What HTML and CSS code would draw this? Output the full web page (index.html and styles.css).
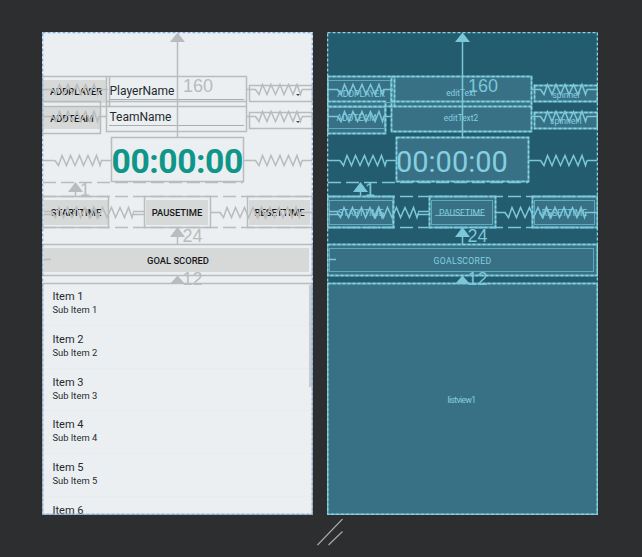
FILE: index.html
```
<!DOCTYPE html>
<html lang="en">
<head>
<meta charset="utf-8">
<title>Layout editor</title>
<link rel="stylesheet" href="styles.css">
</head>
<body>
<svg class="defs" aria-hidden="true">
  <defs>
    <path id="zig" d="M0 0l3.5 5 3.5-10 4.5 10 4-10 4.5 10 4.5-10 4 10 4.5-10 4.5 10 4-10 3.5 10 1.5-5"/>
    <g id="boxes">
      <path d="M.5 44.5H67.5V74.5H.5zM64.5 44.5H204.5V74.5H64.5zM.5 69.5H58.5V101.5H.5zM64.5 69.5H204.5V99.5H64.5zM207.5 53.5H270.5V69.5H207.5zM207.5 80.5H270.5V96.5H207.5z"/>
      <path d="M69.5 105.5H201.5V149.5H69.5zM.5 164.5H66.5V195.5H.5zM102.5 164.5H168.5V195.5H102.5zM205.5 164.5H270.5V195.5H205.5zM.5 212.5H270.5V243.5H.5zM.5 251.5H270.5V482.5H.5z"/>
    </g>
    <g id="guides">
      <path stroke-dasharray="13 5" d="M1 150.5H201M1 164.5H270M1 195.5H270"/>
    </g>
    <g id="links">
      <path d="M1 57.5h10m45 0h10M1 84.5h10m45 0h9M205 57.5h9m46 0h10M205 84.5h9m46 0h10M1 128.5h12m46 0h11M202 128.5h12m46 0h10M2 179.5h10M2 182.5h10M91 179.5h11M91 182.5h11M169 180.5h10M258 180.5h12M2 227.5h7M135.5 10V105M33.5 158V164M135.5 204V212"/>
      <use href="#zig" x="10.5" y="57.5"/><use href="#zig" x="10.5" y="84.5"/>
      <use href="#zig" x="213.5" y="57.5"/><use href="#zig" x="213.5" y="84.5"/>
      <use href="#zig" x="13" y="128.5"/><use href="#zig" x="213.5" y="128.5"/>
      <use href="#zig" x="10" y="180.5"/><use href="#zig" x="45" y="180.5"/>
      <use href="#zig" x="178" y="180.5"/><use href="#zig" x="212.5" y="180.5"/>
      <path class="head" d="M128 10L135.500 .5 143 10zM26 160l7.500-10 7.500 10zM128 205l7.500-10 7.500 10zM128 252l7.500-8.500 7.500 8.500z"/>
      <g class="numbers"><text x="141" y="60">160</text><text x="38" y="163.500">1</text><text x="140.500" y="210">24</text><text x="140.500" y="253">12</text></g>
    </g>
  </defs>
</svg>
<main class="canvas">
  <section class="screen design">
    <div class="row first">
      <div class="cell player"><span class="btn">ADDPLAYER</span></div>
      <div class="cell edit edit1"><span class="field">PlayerName</span></div>
      <div class="cell spinner"><i class="caret"></i></div>
    </div>
    <div class="row second">
      <div class="cell team"><span class="btn">ADDTEAM</span></div>
      <div class="cell edit edit2"><span class="field">TeamName</span></div>
      <div class="cell spinner"><i class="caret"></i></div>
    </div>
    <div class="cell timer">00:00:00</div>
    <div class="row actions">
      <div class="cell start"><span class="btn">STARTTIME</span></div>
      <div class="cell pause"><span class="btn">PAUSETIME</span></div>
      <div class="cell reset"><span class="btn">RESETTIME</span></div>
    </div>
    <div class="cell goal"><span class="btn">GOAL SCORED</span></div>
    <div class="cell list">
      <div class="item"><b>Item 1</b><span>Sub Item 1</span></div>
      <div class="item"><b>Item 2</b><span>Sub Item 2</span></div>
      <div class="item"><b>Item 3</b><span>Sub Item 3</span></div>
      <div class="item"><b>Item 4</b><span>Sub Item 4</span></div>
      <div class="item"><b>Item 5</b><span>Sub Item 5</span></div>
      <div class="item"><b>Item 6</b></div>
      <i class="scrollbar"></i>
    </div>
    <svg class="overlay" width="271" height="483" viewBox="0 0 271 483"><use href="#boxes"/><use href="#guides"/><use href="#links"/><rect class="edge" x=".5" y=".5" width="270" height="482"/></svg>
  </section>
  <section class="screen blueprint">
    <div class="row first">
      <div class="cell player"><span class="btn">ADDPLAYER</span></div>
      <div class="cell edit edit1"><span class="field">editText</span></div>
      <div class="cell spinner"><span>spinner</span></div>
    </div>
    <div class="row second">
      <div class="cell team"><span class="btn">ADDTEAM</span></div>
      <div class="cell edit edit2"><span class="field">editText2</span></div>
      <div class="cell spinner"><span>spinner1</span></div>
    </div>
    <div class="cell timer">00:00:00</div>
    <div class="row actions">
      <div class="cell start"><span class="btn">STARTTIME</span></div>
      <div class="cell pause"><span class="btn">PAUSETIME</span></div>
      <div class="cell reset"><span class="btn">RESETTIME</span></div>
    </div>
    <div class="cell goal"><span class="btn">GOALSCORED</span></div>
    <div class="cell list"><span class="listname">listview1</span></div>
    <svg class="overlay" width="271" height="483" viewBox="0 0 271 483"><use class="solid" href="#boxes"/><use class="dash" href="#boxes"/><use href="#guides"/><use href="#links"/><path d="M108 183.500h50" stroke-width=".8"/><rect class="edge" x=".5" y=".5" width="270" height="482"/></svg>
  </section>
</main>
<svg class="grip" width="26" height="28" viewBox="0 0 26 28"><path d="M.5 26L25.500 0M11.500 26L25.500 12.500"/></svg>
</body>
</html>
```
FILE: styles.css
```
* { box-sizing: border-box; }
body { margin: 0; width: 642px; height: 557px; overflow: hidden; background: #2d2e30; font-family: Roboto, "Liberation Sans", sans-serif; }
.defs { display: none; }
.canvas { display: flex; gap: 14px; padding: 32px 0 0 42px; }
.screen { position: relative; width: 271px; height: 483px; padding-top: 44px; display: flex; flex-direction: column; overflow: hidden; white-space: nowrap; }
.design { background: #ebeff2; color: #252a2d; --line: #b9bcbd; }
.blueprint { background: #235c6e; color: #86cfe0; --line: #7bc6d8; }
.overlay { position: absolute; left: 0; top: 0; fill: none; stroke: var(--line); stroke-width: 1.5; }
.head { fill: var(--line); stroke: none; }
.numbers { fill: var(--line); stroke: none; font: 18px "Liberation Sans", Arial, sans-serif; }
.cell, .row { display: flex; flex: none; }
.row { align-items: flex-start; }
.first { height: 30px; }
.second { height: 32px; margin-top: -5px; }
.player { width: 67px; height: 30px; padding: 4px 3px 3px 1px; }
.team { width: 59px; height: 32px; padding: 6px 1px 4px 1px; }
.edit { width: 140px; height: 30px; }
.edit1 { margin-left: -3px; }
.edit2 { margin-left: 5px; }
.spinner { width: 63px; height: 17px; margin-left: 4px; align-items: center; justify-content: center; }
.first .spinner { margin-top: 9px; }
.second .spinner { margin-top: 11px; }
.btn { flex: 1; display: flex; align-items: center; justify-content: center; font-size: 9.4px; font-weight: 500; }
.timer { margin: 4px 0 0 69px; width: 133px; height: 45px; align-items: center; }
.actions { margin-top: 14px; height: 32px; justify-content: space-between; }
.actions .cell { height: 32px; width: 67px; padding: 4px 3px 3px; }
.actions .start { padding: 4px 1px 3px 2px; }
.actions .pause { padding-left: 2px; }
.goal { margin-top: 16px; height: 32px; padding: 4px 4px 4px 2px; }
.list { margin-top: 7px; height: 232px; position: relative; flex-direction: column; }

.design .btn { background: #d7d8d8; color: #151718; }
.design .player .btn, .design .goal .btn { padding-left: 3px; }
.design .team .btn { padding-left: 1px; }
.design .field { width: 135px; height: 24px; margin-left: 3px; padding: 7px 0 0 .5px; border-bottom: 1px solid #aaadaf; font-size: 12px; line-height: 16px; }
.design .edit2 .field { height: 25px; padding-top: 8px; }
.design .timer { color: #0f9688; font-size: 33.7px; font-weight: 700; letter-spacing: -.45px; padding: 4px 0 0 .5px; }
.design .goal .btn { font-size: 9.4px; }
.caret { border: 2px solid transparent; border-top-color: #444; margin: 5px -33px 0 0; }
.item { height: 42.8px; flex: none; padding: 6px 0 0 10.5px; border-bottom: 1px solid #e8ecef; }
.item b { display: block; font-size: 11px; line-height: 15px; font-weight: 400; }
.item span { display: block; font-size: 9.4px; line-height: 11px; }
.scrollbar { position: absolute; right: 1px; top: 2px; width: 3px; height: 102px; background: #c6ced3; }
.design .edge { stroke: #7fa9d8; stroke-dasharray: 3 2; stroke-width: 1.6; }

.blueprint .cell { background: #387186; }
.blueprint .btn { border: 1px solid #5eabc0; font-size: 8.6px; font-weight: 400; }
.blueprint .first .btn { padding: 4px 0 0 3px; }
.blueprint .field { flex: 1; text-align: center; font-size: 8.3px; line-height: 34px; }
.blueprint .spinner { font-size: 8.5px; }
.blueprint .first .spinner { padding-top: 2px; }
.blueprint .timer { font-size: 29px; padding-top: 5px; }
.blueprint .goal .btn { letter-spacing: .35px; padding: 2px 0 0 2px; }
.blueprint .pause .btn { padding-top: 1px; }
.listname { margin: 111px auto 0; padding-right: 2px; font-size: 8.5px; line-height: 12px; letter-spacing: -.6px; }
.solid { stroke: #5da8bb; stroke-width: 1.8; }
.dash, .blueprint .edge { stroke: #8bd3e2; stroke-dasharray: 3 2; stroke-width: 1.6; }
.grip { display: block; margin: 4px 0 0 317px; fill: none; stroke: #a7a8a9; stroke-width: 1.2; }
```
